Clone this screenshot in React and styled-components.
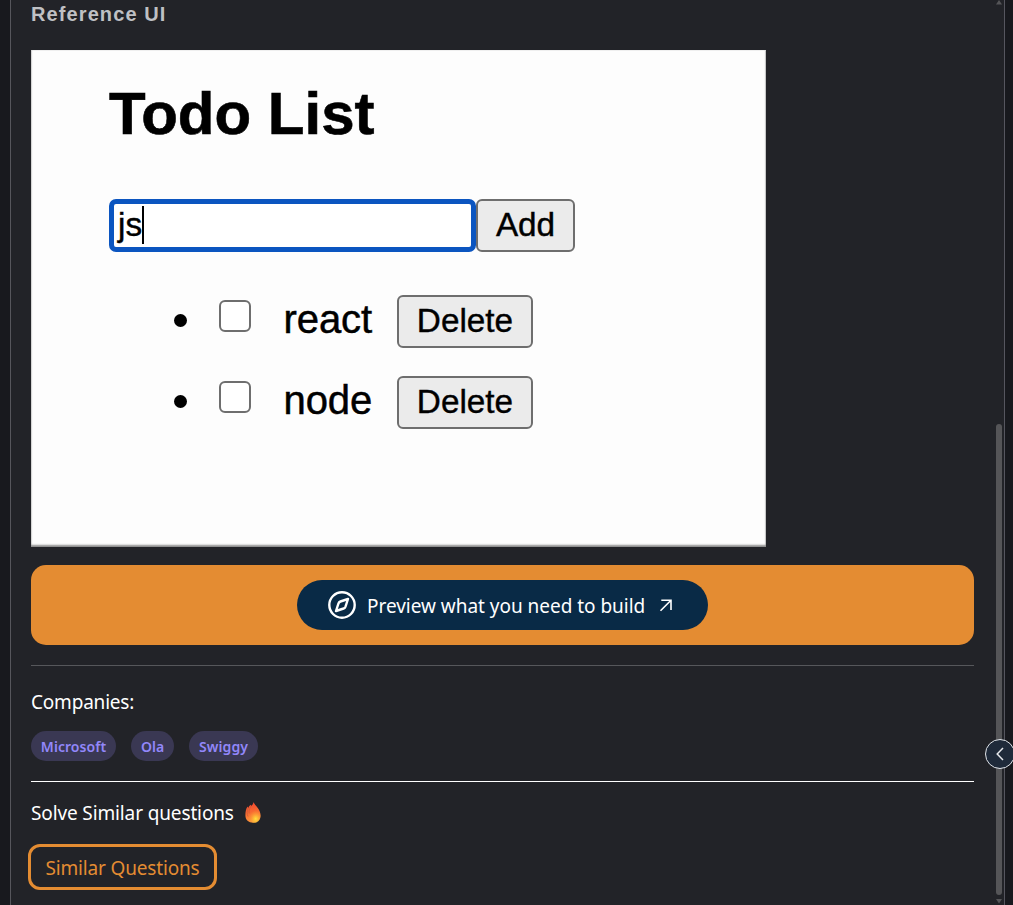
import React from "react";
import styled, { createGlobalStyle } from "styled-components";

const GlobalStyle = createGlobalStyle`
  *, *::before, *::after { box-sizing: border-box; }
  body { margin: 0; background: #18191e; overflow: hidden; }
`;

const Shell = styled.div`
  position: relative;
  display: flex;
  width: 1013px;
  height: 905px;
  padding: 0 8px 0 10px;
  overflow: hidden;
  background: #18191e;
  font-family: "Noto Sans", "Open Sans", sans-serif;
  color: #fff;
`;

const Panel = styled.div`
  display: flex;
  flex: 1;
  height: 905px;
  overflow: hidden;
  background: #222328;
  border-left: 1px solid #56565c;
  border-right: 1px solid #56565f;
`;

const Content = styled.main`
  display: flex;
  flex-direction: column;
  align-items: flex-start;
  flex: 1;
  padding: 0 21px 0 20px;
`;

const Heading = styled.h3`
  margin: 0;
  height: 50px;
  padding-top: 2px;
  font: bold 20px/24px "Liberation Sans", Arial, sans-serif;
  letter-spacing: 1.1px;
  color: #bfc0c4;
`;

const Reference = styled.section`
  width: 735px;
  height: 497px;
  padding: 32px 0 0 78px;
  background: #fdfdfd;
  box-shadow: inset 0 -2px 2px #8c8c8c, inset 1px 1px 0 #efefef, inset -1px 0 0 #dcdcdc;
  color: #000;
  font-family: "Liberation Sans", Arial, sans-serif;
`;

const Title = styled.h2`
  margin: 0;
  height: 117px;
  font-size: 60px;
  line-height: 64px;
  letter-spacing: 0;
  -webkit-text-stroke: 0.6px #000;
`;

const EntryRow = styled.div`
  display: flex;
  height: 53px;
`;

const Entry = styled.div`
  display: flex;
  align-items: center;
  width: 367px;
  height: 53px;
  padding: 0 0 2px 4px;
  border: 5px solid #0b55c0;
  border-radius: 7px;
  font-size: 33.3px;
  line-height: 38px;
  -webkit-text-stroke: 0.4px #000;
  background: #fff;
`;

const Caret = styled.span`
  width: 2px;
  height: 38px;
  background: #000;
`;

const TodoButton = styled.button`
  width: ${(p) => p.$width}px;
  height: 53px;
  margin: 0;
  padding: 0 0 1px;
  border: 2.5px solid #6e6e6e;
  border-radius: 6px;
  background: #ebebeb;
  color: #000;
  font: 33.3px/38px "Liberation Sans", Arial, sans-serif;
  -webkit-text-stroke: 0.4px #000;
`;

const TodoList = styled.ul`
  display: flex;
  flex-direction: column;
  gap: 28px;
  margin: 43px 0 0;
  padding: 0 0 0 65px;
  list-style: none;
`;

const TodoItem = styled.li`
  display: flex;
  align-items: center;
  height: 53px;
`;

const Bullet = styled.span`
  width: 13px;
  height: 13px;
  margin: 0 32px 3px 0.4px;
  border-radius: 50%;
  background: #000;
`;

const Check = styled.span`
  width: 32px;
  height: 32px;
  margin: 0 32.2px 11px 0;
  border: 2.5px solid #6e6e6e;
  border-radius: 6px;
  background: #fff;
`;

const TodoText = styled.span`
  width: 113.4px;
  padding-bottom: 6px;
  font-size: 40px;
  line-height: 46px;
  letter-spacing: -0.1px;
  -webkit-text-stroke: 0.5px #000;
`;

const Banner = styled.div`
  display: flex;
  align-items: center;
  justify-content: center;
  width: 943px;
  height: 80px;
  margin-top: 18px;
  border-radius: 15px;
  background: #e48c32;
`;

const PreviewButton = styled.button`
  display: flex;
  align-items: center;
  width: 411px;
  height: 50px;
  margin: 0;
  padding: 0 0 0 31px;
  border: 0;
  border-radius: 25px;
  background: #092a46;
  color: #fff;
  font: 19px/28px "Noto Sans", "Open Sans", sans-serif;
`;

const PreviewLabel = styled.span`
  width: 278px;
  margin: 2px 14px 0 11px;
  white-space: nowrap;
  text-align: left;
  letter-spacing: -0.03px;
`;

const Divider = styled.hr`
  width: 943px;
  height: 1px;
  margin: ${(p) => p.$top}px 0 0;
  border: 0;
  background: ${(p) => p.$color};
`;

const Label = styled.p`
  display: flex;
  align-items: center;
  height: 28px;
  margin: ${(p) => p.$top}px 0 0;
  font-size: 19px;
  line-height: 28px;
  letter-spacing: ${(p) => p.$spacing}px;
  white-space: nowrap;
`;

const Tags = styled.div`
  display: flex;
  gap: 15px;
  margin-top: 15px;
`;

const Tag = styled.span`
  display: flex;
  align-items: center;
  justify-content: center;
  width: ${(p) => p.$width}px;
  height: 30px;
  padding-top: 1px;
  border-radius: 15px;
  background: #3a3853;
  color: #9287fa;
  font-size: 14px;
  font-weight: 600;
  letter-spacing: ${(p) => p.$spacing}px;
  white-space: nowrap;
`;

const SimilarButton = styled.button`
  width: 189px;
  height: 46px;
  margin: 17px 0 0 -3px;
  padding: 2px 0 0;
  border: 3px solid #e48c32;
  border-radius: 12px;
  background: transparent;
  color: #e48c32;
  font: 19px/28px "Noto Sans", "Open Sans", sans-serif;
  letter-spacing: -0.17px;
  white-space: nowrap;
`;

const Scrollbar = styled.div`
  display: flex;
  flex-direction: column;
  align-items: flex-start;
  width: 9px;
  height: 905px;
  padding-left: 1px;
`;

const Thumb = styled.div`
  width: 6px;
  height: 471px;
  margin: 419px 0 4px;
  border-radius: 3px;
  background: #555558;
`;

const Collapse = styled.button`
  position: absolute;
  top: 739px;
  left: 985px;
  display: flex;
  align-items: center;
  justify-content: center;
  width: 30px;
  height: 30px;
  padding: 0;
  border: 1px solid #dfe3e8;
  border-radius: 50%;
  background: #1f2a3a;
  color: #e5e7eb;
`;

const Fire = styled.svg`
  margin: 0 0 1px 11px;
`;

const todos = ["react", "node"];
const companies = [
  { name: "Microsoft", width: 85, spacing: 0.05 },
  { name: "Ola", width: 43, spacing: 0 },
  { name: "Swiggy", width: 69, spacing: 0.1 },
];

export default function App() {
  return (
    <Shell>
      <GlobalStyle />
      <Panel>
        <Content>
          <Heading>Reference UI</Heading>
          <Reference>
            <Title>Todo List</Title>
            <EntryRow>
              <Entry>js<Caret /></Entry>
              <TodoButton $width={99}>Add</TodoButton>
            </EntryRow>
            <TodoList>
              {todos.map((todo) => (
                <TodoItem key={todo}>
                  <Bullet />
                  <Check />
                  <TodoText>{todo}</TodoText>
                  <TodoButton $width={136}>Delete</TodoButton>
                </TodoItem>
              ))}
            </TodoList>
          </Reference>
          <Banner>
            <PreviewButton>
              <svg width="28" height="28" viewBox="0 0 28 28" fill="none" stroke="currentColor" strokeWidth="2.4" strokeLinejoin="round">
                <circle cx="14" cy="14" r="12.7" />
                <path d="M20 8 L12.4 10.5 Q11 11 10.5 12.4 L8 20 L15.6 17.5 Q17 17 17.5 15.6 Z" />
              </svg>
              <PreviewLabel>Preview what you need to build</PreviewLabel>
              <svg width="14" height="14" viewBox="0 0 14 14" fill="none" stroke="currentColor" strokeWidth="1.6">
                <path d="M2.3 2.3 H12 V12 M12 2.3 L1.5 12.8" />
              </svg>
            </PreviewButton>
          </Banner>
          <Divider $top={20} $color="#56575b" />
          <Label $top={22} $spacing={-0.2}>Companies:</Label>
          <Tags>
            {companies.map((c) => (
              <Tag key={c.name} $width={c.width} $spacing={c.spacing}>{c.name}</Tag>
            ))}
          </Tags>
          <Divider $top={20} $color="#ffffff" />
          <Label $top={17} $spacing={-0.13}>
            Solve Similar questions
            <Fire width="16" height="21" viewBox="0 0 16 21">
              <defs>
                <linearGradient id="flame" x1="0.4" y1="0" x2="0.6" y2="1">
                  <stop offset="0" stopColor="#f2432f" />
                  <stop offset="0.5" stopColor="#f86d32" />
                  <stop offset="1" stopColor="#fb9a3c" />
                </linearGradient>
                <radialGradient id="core" cx="0.6" cy="0.7" r="0.6">
                  <stop offset="0" stopColor="#ffe43c" />
                  <stop offset="1" stopColor="#ff9c30" stopOpacity="0" />
                </radialGradient>
              </defs>
              <path fill="url(#flame)" d="M8.5 0 C9.5 3.5 15.6 6.5 15.6 13.5 C15.6 18 12.5 20.7 8.2 20.7 C3.6 20.7 .4 18 .4 13.5 C.4 10 .8 7 2.5 4.5 L3.2 6 C4 4 5 3.2 6 2.8 L6.2 4 C7.3 3 8.2 2 8.5 0Z" />
              <path fill="none" stroke="#c95c38" strokeWidth=".8" d="M3.3 6 C1.8 9 1.8 12 3 14.5 M6.2 4 C4 7 3.8 9.5 4.2 11.5" />
              <ellipse cx="9.5" cy="14" rx="6" ry="7" fill="url(#core)" />
            </Fire>
          </Label>
          <SimilarButton>Similar Questions</SimilarButton>
        </Content>
        <Scrollbar>
          <svg width="6" height="5" viewBox="0 0 6 5"><path d="M3 0 L6 4.5 H0Z" fill="#555558" /></svg>
          <Thumb />
          <svg width="6" height="5" viewBox="0 0 6 5"><path d="M0 0 H6 L3 4.5Z" fill="#555558" /></svg>
        </Scrollbar>
      </Panel>
      <Collapse aria-label="Collapse">
        <svg width="8" height="14" viewBox="0 0 8 14" fill="none" stroke="currentColor" strokeWidth="1.5">
          <path d="M7 1 L1.2 7 L7 13" />
        </svg>
      </Collapse>
    </Shell>
  );
}
